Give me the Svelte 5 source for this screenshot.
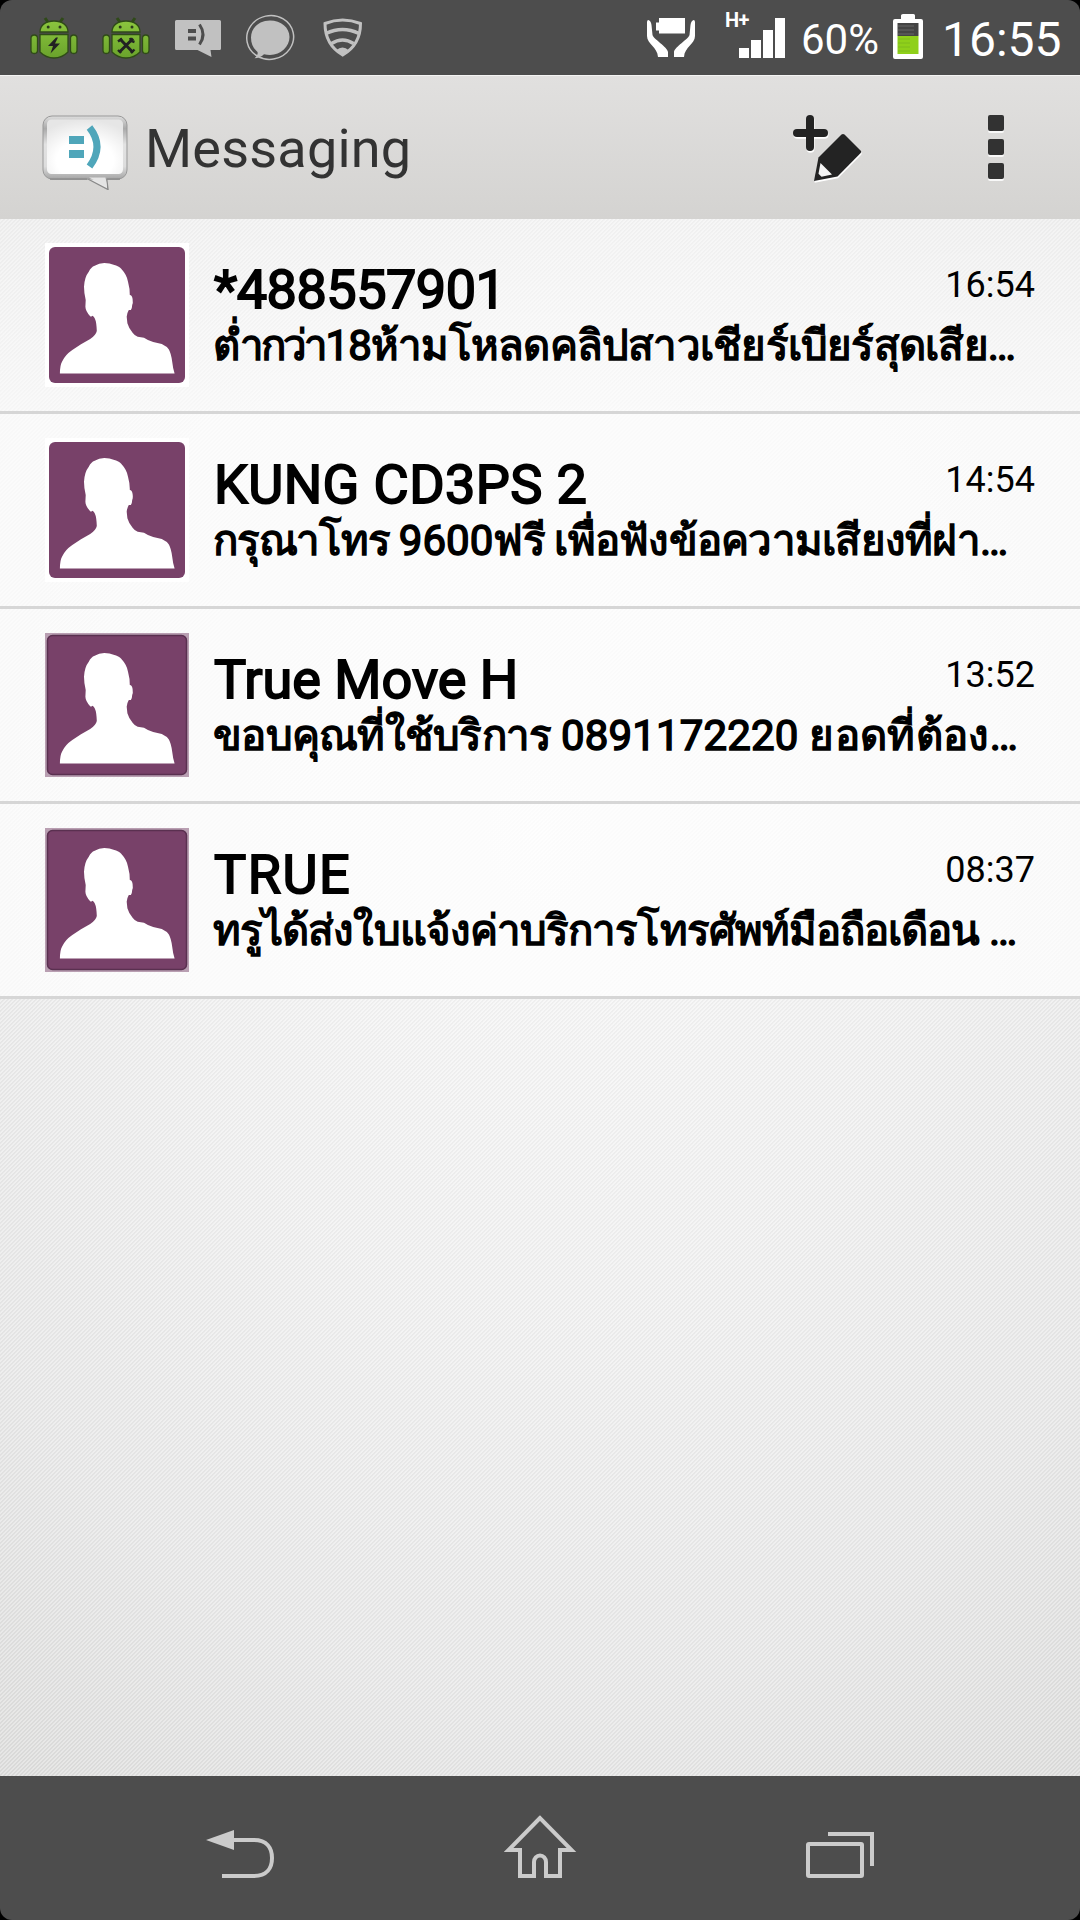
<script>
  // Each preview is split into runs of [text, letter spacing in px].
  const threads = [
    { name: '*488557901', gap: -0.5, time: '16:54', runs: [['ต่ำกว่า', -2.9], ['18ห้ามโหลดคลิปสาวเชียร์เบียร์สุดเสีย…', -0.78]], framed: false },
    { name: 'KUNG CD3PS 2', gap: 0.4, time: '14:54', runs: [['กรุณาโทร ', -1.2], ['9600', 0], ['ฟรี เพื่อฟังข้อความเสียงที่ฝา…', -0.75]], framed: false },
    { name: 'True Move H', gap: 0, time: '13:52', runs: [['ขอบคุณที่ใช้บริการ ', -0.75], ['0891172220', 0.15], [' ยอดที่ต้อง…', 0.35]], framed: true },
    { name: 'TRUE', gap: 1.5, time: '08:37', runs: [['ทรูได้ส่งใบแจ้งค่าบริการโทรศัพท์มือถือเดือน …', -0.92]], framed: true }
  ];
</script>

{#snippet robot(kind)}
  <svg class="robot" width="52" height="75" viewBox="28 0 52 75">
    <defs>
      <linearGradient id="droid" x1="0" y1="20" x2="0" y2="58" gradientUnits="userSpaceOnUse">
        <stop offset="0" stop-color="#8cc63f" /><stop offset="1" stop-color="#6aa32c" />
      </linearGradient>
    </defs>
    <g stroke="#2f4a18" stroke-width="1.3" fill="url(#droid)">
      <path d="M45 18l3.500 5M63 18l-3.500 5" stroke-width="3" />
      <path d="M40 32c0-7 6-11 14-11s14 4 14 11z" />
      <rect x="31" y="35" width="6.500" height="18.500" rx="3.200" />
      <rect x="70.500" y="35" width="6.500" height="18.500" rx="3.200" />
      <path d="M40 34.500h28v17.500c-4 4-8 6-14 6s-10-2-14-6z" />
    </g>
    <circle cx="48.200" cy="27" r="1.500" fill="#2b3a1c" /><circle cx="60" cy="27" r="1.500" fill="#2b3a1c" />
    {#if kind === 'bolt'}
      <path d="M56 37.500l-8 8.500h5l-2.500 7.500 9.500-10h-5l3-6z" fill="#222" />
    {:else}
      <path d="M48 39l13 13.500M61 38.500L48 51.500" stroke="#222" stroke-width="3" />
      <path d="M46 41.500l4-3M58 38l1.500 3 3 1M46 50l3 3M59 53l3.500-3.500" stroke="#222" stroke-width="2.400" fill="none" />
    {/if}
  </svg>
{/snippet}

<div class="screen">
  <div class="status">
    <div class="notices">
      {@render robot('bolt')}
      {@render robot('tools')}
      <svg width="50" height="75" viewBox="173 0 50 75">
        <path d="M176.500 20h43q1.500 0 1.500 1.500v27q0 1.500-1.500 1.500H210.500l1 7-14-7h-21q-1.500 0-1.500-1.500v-27q0-1.500 1.500-1.500z" fill="#c1c1c1" />
        <path d="M188 29h8v4h-8zM188 36.500h8v4h-8z" fill="#4d4d4d" />
        <path d="M199.500 24.500q7 10 0 20" fill="none" stroke="#4d4d4d" stroke-width="3" />
      </svg>
      <svg width="54" height="75" viewBox="243 0 54 75">
        <ellipse cx="270.200" cy="37.500" rx="23.500" ry="21.800" fill="none" stroke="#c1c1c1" stroke-width="1.500" transform="rotate(-12 270 37.500)" />
        <path d="M270 20.500c11 0 19.500 7 19.500 16.500S281 55 270 55q-3 0-6-.7-4 3.700-9.500 4 4-3 3-6.300c-4-3.500-6.500-8-6.500-14.500 0-9.500 8-17 19-17z" fill="#c1c1c1" />
      </svg>
      <svg width="42" height="75" viewBox="322 0 42 75" fill="none" stroke="#c1c1c1" stroke-width="3">
        <path d="M325 23.500q17.500-7 35.500 0c0 14-6.500 25-17.800 31.500C331.500 48.500 325 37.500 325 23.500z" />
        <path d="M326 33.500q16.500-8 33 0M331.500 43.500q11-7 22 0" stroke-width="3.600" />
        <path d="M336 50.500q6.500-6 13 0l-6.500 4.500z" fill="#c1c1c1" stroke="none" />
      </svg>
    </div>
    <div class="system">
      <svg width="50" height="75" viewBox="646 0 50 75" fill="#fff">
        <path d="M659 18h26v15.500h-26v-3h-3v-8h3z" />
        <path d="M648.500 20q2.500 1 3 5l1 10c1 4 15 12 15.500 17v5h-10c-.5-10-11-13-11-21V22q0-2 1.500-2zM693.500 20q-2.500 1-3 5l-1 10c-1 4-15 12-15.500 17v5h10c.5-10 11-13 11-21V22q0-2-1.500-2z" />
      </svg>
      <div class="cell">
        <svg width="62" height="75" viewBox="725 0 62 75" fill="#fff">
          <path d="M739 48h10v10h-10zM751 40h10v18h-10zM763 30h10v28h-10zM775 18h10v40h-10z" />
        </svg>
        <span class="net">H+</span>
      </div>
      <span class="pct">60%</span>
      <svg width="32" height="75" viewBox="892 0 32 75">
        <path d="M903 14h10.500q1.500 0 1.500 1.500V19h6q2 0 2 2v36q0 2-2 2h-26q-2 0-2-2V21q0-2 2-2h6v-3.500q0-1.500 2-1.500z" fill="#fff" />
        <path d="M897.500 23h21v13h-21z" fill="#444" />
        <path d="M898 26h16M898 30h16M898 34h16" stroke="#666" />
        <path d="M897.500 36h21v18h-21z" fill="#8fd01a" />
        <path d="M898 39h12M898 43h12M898 47h12M898 51h12" stroke="#7fbc1c" />
      </svg>
      <span class="clock">16:55</span>
    </div>
  </div>

  <header>
    <svg class="logo" width="90" height="80" viewBox="40 110 90 80">
      <defs>
        <linearGradient id="rim" x1="0" y1="0" x2="0" y2="1">
          <stop offset="0" stop-color="#dedede" /><stop offset=".2" stop-color="#aaa" />
          <stop offset=".45" stop-color="#e2e2e2" /><stop offset=".8" stop-color="#ddd" /><stop offset="1" stop-color="#a5a5a5" />
        </linearGradient>
        <radialGradient id="face" cx=".5" cy=".75" r=".75">
          <stop offset=".5" stop-color="#fff" /><stop offset="1" stop-color="#e6e6e6" />
        </radialGradient>
      </defs>
      <path d="M86 178l22 11.500-1.500-12z" fill="#e8e8e8" stroke="#8a8a8a" stroke-width="1.400" />
      <rect x="43" y="116" width="84" height="63" rx="9" fill="url(#rim)" stroke="#999" stroke-width="1" />
      <path d="M50 179.200h37" stroke="#858585" stroke-width="1.200" />
      <path d="M107 179.200h13" stroke="#858585" stroke-width="1.200" />
      <path d="M89 177.500l18 9.500-1.500-9.500z" fill="#e4e4e4" />
      <rect x="47" y="119.500" width="76" height="54.500" rx="4.500" fill="url(#face)" />
      <path d="M69 136h15v8H69zM69 150h15v8H69z" fill="#4fa6ba" />
      <path d="M89.500 127.500q15 19 0 39" fill="none" stroke="#4fa6ba" stroke-width="7" />
    </svg>
    <h1>Messaging</h1>
    <svg class="compose" width="72" height="75" viewBox="791 110 72 75">
      <g fill="#fff" transform="translate(.5 1.800)">
        <rect x="793" y="128" width="35" height="8" rx="4" /><rect x="806" y="114" width="8" height="36" rx="4" />
        <path d="M841.500 133.500q1.500-1 3 0L861 150q.5 1-.3 2L837.500 175.500 814 180l4.500-23.500z" />
      </g>
      <g fill="#232323">
        <rect x="793" y="128" width="35" height="8" rx="4" /><rect x="806" y="114" width="8" height="36" rx="4" />
        <path d="M841.500 133.500q1.500-1 3 0L861 150q.5 1-.3 2L837.500 175.500 814 180l4.500-23.500z" />
      </g>
      <path d="M820.500 162l11.500 11.500-10.500 2.300-3-3z" fill="#f5f5f5" />
    </svg>
    <div class="more"><i></i><i></i><i></i></div>
  </header>

  <main>
    {#each threads as t}
      <article>
        <svg class="avatar" width="144" height="144" viewBox="0 0 144 144">
          {#if t.framed}
            <rect width="144" height="144" fill="#b99fb2" />
            <rect x="2.500" y="2.500" width="139" height="139" rx="5" fill="#784169" stroke="#5a3050" stroke-width="1.500" />
          {:else}
            <rect width="144" height="144" fill="#fff" />
            <rect x="4" y="4" width="136" height="136" rx="6" fill="#784169" />
          {/if}
          <path fill="#fff" d="M14.900 130.500Q15 122 17 118.700Q20 112 27.300 107L36 101.300L45.200 96Q51 92 51.800 88Q51.500 80 50.400 77Q49 73 47.300 72.700Q46 74 45.200 73.300Q40.500 68 40.400 63.700L40.700 57Q39 50 39 43.700Q39.500 34 43.800 28.700Q46 24 49.700 22.700Q54 20 59.300 20Q65 20 68.600 21.700Q74 23 76.200 25.700Q82 32 83 38.700Q85 46 84.800 52Q87 52 87.600 56Q88.200 60 87.200 62Q87 66 85.900 67H83.800Q82 70 81.700 73.700L82.400 80.300Q84 86 87.600 89.700Q90 93 92.700 93.700L99 94.700Q103 97.500 108.200 99L116.800 101Q122 103.500 123.700 106.300Q126 110 127.200 118.700Q128 126 129.600 130.500z" />
        </svg>
        <div class="body">
          <div class="top"><h2 style:letter-spacing="{t.gap}px">{t.name}</h2><time>{t.time}</time></div>
          <p>{#each t.runs as [text, gap]}<span style:letter-spacing="{gap}px">{text}</span>{/each}</p>
        </div>
      </article>
    {/each}
  </main>

  <nav>
    <svg width="80" height="80" viewBox="200 1810 80 80">
      <path d="M206 1840l28-10v20z" fill="#cbcbcb" />
      <path d="M233 1840h21c13 0 18 8 18 18s-5 18-18 18h-32" />
    </svg>
    <svg width="80" height="80" viewBox="500 1810 80 80">
      <path d="M540 1818L508.500 1850H520v26h14v-14a6 6.500 0 0 1 12 0v14h14v-26h11.500z" />
    </svg>
    <svg width="80" height="80" viewBox="800 1810 80 80">
      <rect x="808" y="1844" width="54" height="32" rx="1" />
      <path d="M828 1834h44v32" />
    </svg>
  </nav>
</div>

<style>
  :global(body) { margin: 0; background: #000; }
  .screen {
    width: 1080px; height: 1920px; display: flex; flex-direction: column;
    border-radius: 12px; overflow: hidden; font-family: Roboto, sans-serif; color: #000;
  }
  svg { display: block; flex: none; }
  .status {
    height: 75px; box-sizing: border-box; background: #4d4d4d; color: #fff;
    display: flex; justify-content: space-between; padding: 0 19px 0 28px;
  }
  .notices { display: flex; gap: 20px; }
  .notices svg:nth-child(3) { margin-left: 1px; }
  .notices svg:last-child { margin-left: 5px; }
  .system { display: flex; align-items: flex-start; }
  .cell { position: relative; margin-left: 29px; }
  .net { position: absolute; left: 0; top: 8px; font-size: 20px; line-height: 24px; font-weight: 700; letter-spacing: -0.500px; }
  .pct { font-size: 42px; line-height: 79px; width: 78px; margin-left: 14px; }
  .clock { font-size: 48px; line-height: 79px; width: 119px; margin-left: 18px; }
  .system svg:nth-of-type(2) { margin-left: 13px; }
  header {
    height: 144px; box-sizing: border-box; display: flex; align-items: flex-start;
    padding: 35px 76px 0 40px; border-top: 1px solid #f4f4f3;
    background: linear-gradient(#e1e0df, #d4d3d1);
  }
  h1 { margin: 3px 0 0 15px; flex: 1; font-size: 54px; line-height: 70px; font-weight: 400; color: #333; letter-spacing: 0.200px; }
  .logo { margin-top: -1px; }
  .compose { margin-right: 125px; }
  .more { display: flex; flex-direction: column; gap: 8px; padding-top: 4px; }
  .more i { width: 16px; height: 16px; border-radius: 2px; background: #323232; box-shadow: 0 2px 0 #f8f8f8; }
  main {
    flex: 1;
    background:
      repeating-linear-gradient(135deg, rgba(0,0,0,.022) 0 1.414px, rgba(255,255,255,.25) 1.414px 2.828px),
      radial-gradient(ellipse 900px 1150px at 540px 620px, #f7f7f7 0, #f1f1f1 40%, #e8e8e8 75%, #dededd 100%);
  }
  article {
    height: 195px; box-sizing: border-box; border-bottom: 3px solid #d6d6d6;
    display: flex; padding: 24px 45px 0; background: rgba(255,255,255,.72);
    background-clip: padding-box;
  }
  article:first-child { background: linear-gradient(rgba(255,255,255,.35), rgba(255,255,255,.66)) padding-box; }
  .body { margin: 18px 0 0 25px; flex: 1; min-width: 0; }
  .top { display: flex; justify-content: space-between; }
  h2 { margin: 0; font-size: 54px; line-height: 57px; font-weight: 400; -webkit-text-stroke: 1.800px #000; }
  time { font-size: 36px; line-height: 48px; }
  p { margin: 3px 0 0 -1px; font-size: 42px; line-height: 50px; white-space: nowrap; -webkit-text-stroke: 1.500px #000; }
  nav {
    height: 144px; background: #4d4d4d; display: flex; gap: 220px; justify-content: center;
    align-items: flex-start; padding-top: 34px; box-sizing: border-box;
  }
  nav svg { fill: none; stroke: #cbcbcb; stroke-width: 4; }
  nav path[fill] { stroke: none; }
</style>
